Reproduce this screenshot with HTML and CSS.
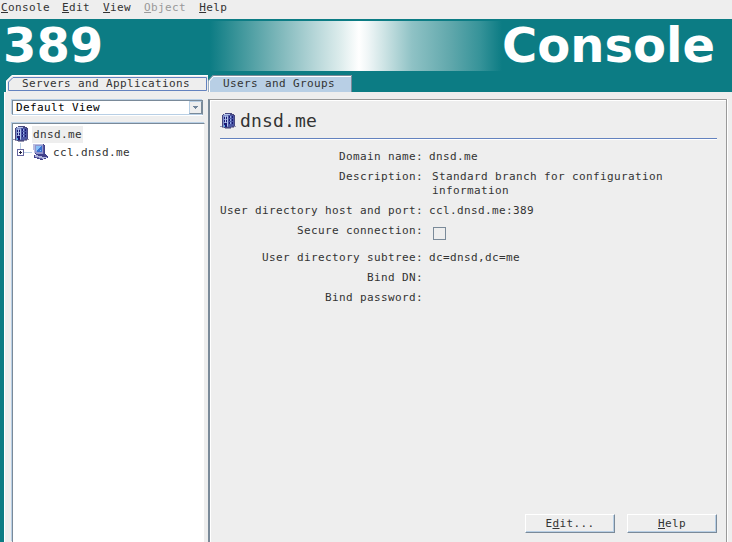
FILE: index.html
```
<!DOCTYPE html>
<html lang="en">
<head>
<meta charset="utf-8">
<title>389 Console</title>
<link rel="stylesheet" href="styles.css">
</head>
<body>
<svg class="symbols" width="0" height="0" aria-hidden="true">
  <symbol id="building" viewBox="0 0 16 16" shape-rendering="crispEdges">
    <path fill="#9494b0" d="M0 13h2v-1h12v1h2v1h-2v1h-3v1H5v-1H2v-1H0z"/>
    <path fill="#484880" d="M2 2h1V1h2V0h7v1h2v1h1v11h-1v1h-3v1H4v-1H2z"/>
    <path fill="#8494cc" d="M3 2h5v12H3z"/>
    <path fill="#b4c4ec" d="M4 1h6v1H4zM5 3h1v8H5zM7 3h1v10H7z"/>
    <path fill="#4c58a4" d="M8 2h5v1h1v10h-2v1H8z"/>
    <path fill="#181874" d="M4 4h1v2H4zM6 4h1v2H6zM4 7h1v2H4zM6 7h1v2H6zM4 10h3v4H5v-1H4zM9 3h1v2H9zM9 6h1v2H9zM9 9h1v2H9zM12 3h1v2h-1zM12 6h1v2h-1zM12 9h1v2h-1z"/>
    <path fill="#90a8e8" d="M10 3h1v2h-1zM10 6h1v2h-1zM10 9h1v2h-1z"/>
    <path fill="#50b0e8" d="M4 12h1v2H4z"/>
  </symbol>
  <symbol id="computer" viewBox="0 0 16 16" shape-rendering="crispEdges">
    <path fill="#40408a" d="M1 0h11v1h1v9h1v1h1v1h1v2h-2v1h-3v1H8v-1H5v-1H2v-3h2v-1H3V9H2V6H1z"/>
    <path fill="#b8bce0" d="M1 0h10v1H3v8H2V6H1z"/>
    <path fill="#9094cc" d="M3 1h8v9H4V9H3z"/>
    <path fill="#3870d0" d="M4 2h6v6H5V7H4z"/>
    <path fill="#88c0f8" d="M4 2h5v1H8v1H7v1H6v1H5v1H4zM8 6h1v1H8z"/>
    <path fill="#54549c" d="M11 1h1v9h-1z"/>
    <path fill="#b0b4dc" d="M3 11h3v1h4v1h5v1h-3v1H9v-1H6v-1H3z"/>
    <path fill="#6868a8" d="M4 13h3v1h3v1H7v-1H4z"/>
  </symbol>
</svg>
<nav class="menubar">
  <span><u>C</u>onsole</span><span><u>E</u>dit</span><span><u>V</u>iew</span><span class="disabled"><u>O</u>bject</span><span><u>H</u>elp</span>
</nav>
<header class="banner"><div class="brand"><span>389</span><span>Console</span></div></header>
<div class="tabs">
  <div class="tab active">
    <svg width="202" height="17" viewBox="0 0 202 17"><path d="M0 17V6L6 0H202V17z" fill="#eee"/><path d="M.5 17V6L6 .5H202" fill="none" stroke="#fff"/><path d="M2.5 15.5V7L7 2.5H200.5V15.5z" fill="none" stroke="#6382bf"/></svg>
    <span>Servers and Applications</span>
  </div>
  <div class="tab">
    <svg width="144" height="17" viewBox="0 0 144 17"><path d="M0 17V6L5 0H144V17z" fill="#b8cfe5"/><path d="M0 17V5.5L5 .5H143.5V17" fill="none" stroke="#7a8a99"/><path d="M1.5 17V6L5.5 1.5H143" fill="none" stroke="#fff"/></svg>
    <span>Users and Groups</span>
  </div>
</div>
<main class="content">
  <aside class="sidebar">
    <div class="select"><span>Default View</span><i><svg width="6" height="4" viewBox="0 0 6 4" shape-rendering="crispEdges"><path d="M0 0h5v1H4v1H3v1H2V2H1V1H0z" fill="#71859a"/></svg></i></div>
    <div class="tree">
      <div class="node root"><svg width="16" height="16"><use href="#building"/></svg><span>dnsd.me</span></div>
      <div class="node child"><svg width="16" height="18" viewBox="0 0 16 18" shape-rendering="crispEdges"><path d="M4 0h1v6H4zM8 9h8v1H8z" fill="#b8cfe5"/><path d="M1.5 6.5h6v6h-6z" fill="#fff" stroke="#6666a0"/><path d="M3 9h3v1H3zM4 8h1v3H4z" fill="#202040"/></svg><svg class="host" width="16" height="16"><use href="#computer"/></svg><span>ccl.dnsd.me</span></div>
    </div>
  </aside>
  <section class="detail">
    <h1><svg width="16" height="16"><use href="#building"/></svg><span>dnsd.me</span></h1>
    <dl class="fields">
      <dt>Domain name:</dt><dd>dnsd.me</dd>
      <dt>Description:</dt><dd class="inset">Standard branch for configuration information</dd>
      <dt>User directory host and port:</dt><dd>ccl.dnsd.me:389</dd>
      <dt class="secure">Secure connection:</dt><dd class="secure"><span class="checkbox"></span></dd>
      <dt>User directory subtree:</dt><dd>dc=dnsd,dc=me</dd>
      <dt>Bind DN:</dt><dd></dd>
      <dt>Bind password:</dt><dd></dd>
    </dl>
    <div class="actions"><button>E<u>d</u>it...</button><button><u>H</u>elp</button></div>
  </section>
</main>
</body>
</html>
```
FILE: styles.css
```
* { box-sizing: border-box; }
body {
  margin: 0;
  width: 732px;
  height: 542px;
  overflow: hidden;
  display: flex;
  flex-direction: column;
  background: #0c7c84;
  color: #333;
  font: 11px/14px "DejaVu Sans Mono", monospace;
  letter-spacing: .378px;
}
svg { display: block; flex: none; }
.symbols { position: absolute; }
u { text-decoration: underline; text-underline-offset: 1px; text-decoration-thickness: 1px; }
.menubar {
  display: flex;
  gap: 13px;
  height: 19px;
  flex: none;
  padding: 1px 0 0 1px;
  background: #eee;
}
.menubar span:first-child { margin-right: -1px; }
.disabled { color: #999; }
.banner { flex: none; height: 56px; padding-top: 2px; }
.brand {
  display: flex;
  justify-content: space-between;
  height: 50px;
  padding: 0 17px 0 3px;
  color: #fff;
  font: bold 48px/49px "DejaVu Sans", sans-serif;
  letter-spacing: 0;
  background: linear-gradient(90deg, #0c7c84 210px, #369297 235px, #7fb8bb 280px, #b6d6d8 315px, #dcecec 340px, #f4f9f9 353px, #fff 359px, #f0f6f7 368px, #d2e6e7 382px, #8fc2c5 412px, #61a8ac 450px, #369399 480px, #0c7c84 502px);
}
.tabs { display: flex; flex: none; height: 17px; padding-left: 6px; }
.tab { display: grid; }
.tab > * { grid-area: 1 / 1; }
.tab span { padding: 2px 0 0 15px; line-height: 13px; }
.tab.active span { padding-left: 16px; }
.content {
  display: flex;
  flex: 1;
  min-height: 0;
  margin-left: 4px;
  padding: 7px 5px 0 6px;
  background: #eee;
  border-left: 1px solid #fff;
}
.sidebar { width: 195px; flex: none; display: flex; flex-direction: column; gap: 8px; }
.select {
  display: flex;
  justify-content: space-between;
  height: 15px;
  width: 191px;
  margin: 1px 0 0 1px;
  padding: 0 0 0 3px;
  color: #000;
  background: #fff;
  border: 1px solid #7a8a99;
  border-bottom-color: #b8cfe5;
  box-shadow: -1px -1px #b8cfe5, 0 1px #fff;
}
.select span { line-height: 14px; }
.select i {
  display: grid;
  place-items: center;
  width: 13px;
  background: #eee;
  border: 1px solid #b8cfe5;
  border-right-color: #7a8a99;
  border-bottom-color: #7a8a99;
}
.tree {
  flex: 1;
  width: 193px;
  margin-left: 1px;
  padding: 1px 0 0;
  background: #fff;
  border: 1px solid #7a8a99;
  border-right: 1px solid #eee;
  border-bottom: 0;
  box-shadow: -1px -1px #b8cfe5;
}
.node { display: flex; height: 18px; line-height: 16px; }
.root { align-items: center; gap: 3px; }
.root span { background: #eee; padding: 1px 1px 0; }
.child { padding-left: 3px; }
.child span { padding: 2px 0 0 5px; }
.host { margin-top: 1px; }
.detail {
  display: flex;
  flex-direction: column;
  flex: 1;
  margin-left: 2px;
  padding: 12px 9px 0 10px;
  border: 1px solid #999;
  border-left: 2px solid #7a8a99;
  border-bottom: 0;
  box-shadow: inset 1px 1px #fff, 1px 0 #fff;
}
h1 {
  display: flex;
  align-items: center;
  gap: 4px;
  height: 27px;
  margin: 0;
  padding-bottom: 9px;
  border-bottom: 1px solid #6382bf;
  box-shadow: 0 1px #fff;
  font: 18px/18px "DejaVu Sans Mono", monospace;
  letter-spacing: .163px;
}
.fields {
  display: grid;
  grid-template-columns: 203px 1fr;
  gap: 6px;
  margin: 11px 0 0;
}
dt { text-align: right; white-space: nowrap; margin-left: -4px; }
dd { margin: 0; min-height: 14px; }
.inset { padding-left: 3px; width: 250px; }
.secure { height: 21px; }
.checkbox {
  display: block;
  width: 13px;
  height: 13px;
  margin: 3px 0 0 4px;
  border: 1px solid #7a8a99;
}
.actions { display: flex; justify-content: flex-end; gap: 12px; margin-top: auto; padding-bottom: 9px; }
button {
  width: 90px;
  height: 19px;
  padding: 0;
  color: inherit;
  font: inherit;
  letter-spacing: inherit;
  background: #eee;
  border: 1px solid;
  border-color: #fff #7a8a99 #7a8a99 #fff;
  box-shadow: inset -1px -1px #b8cfe5;
}
```
